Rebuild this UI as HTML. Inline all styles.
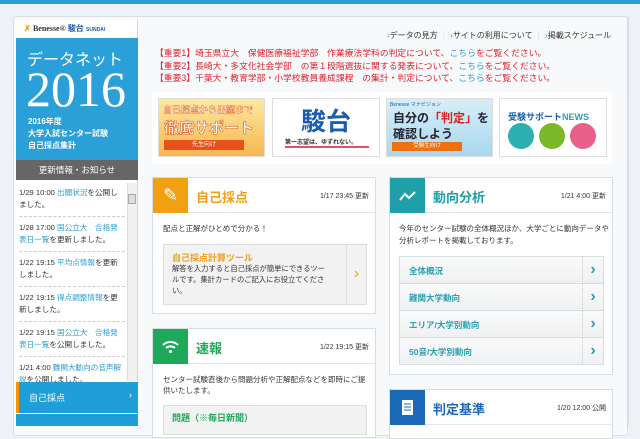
<!DOCTYPE html>
<html><head><meta charset="utf-8"><style>
*{margin:0;padding:0;box-sizing:border-box}
body{width:640px;height:426px;overflow:hidden;background:#eef2f6;font-family:"Liberation Sans","Noto Sans CJK JP",sans-serif;position:relative;font-size:8px;color:#333}
.a{position:absolute}
.blue{color:#2a9fd0}
.card{position:absolute;background:#fff;border:1px solid #d6dde3}
.ch{height:35px;border-bottom:1px solid #e3e7ea;position:relative}
.ic{position:absolute;left:0;top:0;width:35px;height:35px}
.ct{position:absolute;left:43px;top:9px;font-size:13px;font-weight:bold}
.cd{position:absolute;right:6px;top:13px;font-size:7px;color:#333}
.li{height:27px;border-bottom:1px solid #d8dde2;background:linear-gradient(#fafafa,#eef0f2);position:relative;font-weight:bold;color:#2aa0b0;font-size:8.5px;padding:8px 9px}
.li:after{content:"›";position:absolute;right:0;top:0;width:20px;height:27px;border-left:1px dotted #ccc;text-align:center;font-size:16px;line-height:25px;color:#2aa0b0}
.news div{padding:5px 0 5px 0;border-bottom:1px dashed #ccc;font-size:7.6px;line-height:12px;margin-right:12px}
</style></head><body>
<div class="a" style="left:0;top:0;width:640px;height:4px;background:#2a9fd0"></div>
<div class="a" style="left:13px;top:16px;width:615px;height:420px;background:#f7f9fa;border:1px solid #d8dee3;border-radius:3px"></div>
<!-- sidebar -->
<div class="a" style="left:15px;top:20px;width:123px;height:406px;background:#fff;border-right:1px solid #d0d8de"></div>
<div class="a" style="left:24px;top:23px;font-size:8px;font-weight:bold;color:#333"><span style="color:#f39800">✗</span> <span style="font-family:'Liberation Serif',serif">Benesse®</span> <span style="color:#1f5aa8">駿台</span> <span style="font-size:5px;color:#1f5aa8">SUNDAI</span></div>
<div class="a" style="left:16px;top:38px;width:122px;height:122px;background:#2a9fd8;color:#fff">
 <div class="a" style="left:11px;top:8px;font-size:16px;white-space:nowrap">データネット</div>
 <div class="a" style="left:10px;top:26px;font-size:50px;font-family:'Liberation Serif',serif;line-height:50px">2016</div>
 <div class="a" style="left:12px;top:78px;font-size:8px;font-weight:bold;line-height:12px">2016年度<br>大学入試センター試験<br>自己採点集計</div>
</div>
<div class="a" style="left:16px;top:160px;width:122px;height:20px;background:#666;color:#fff;font-size:8.5px;text-align:center;line-height:20px">更新情報・お知らせ</div>
<div class="a news" style="left:19px;top:182px;width:118px;height:200px;overflow:hidden">
<div>1/29 10:00 <span class="blue">出願状況</span>を公開しました。</div>
<div>1/28 17:00 <span class="blue">国公立大　合格発表日一覧</span>を更新しました。</div>
<div>1/22 19:15 <span class="blue">平均点情報</span>を更新しました。</div>
<div>1/22 19:15 <span class="blue">得点調整情報</span>を更新しました。</div>
<div>1/22 19:15 <span class="blue">国公立大　合格発表日一覧</span>を公開しました。</div>
<div>1/21 4:00 <span class="blue">難関大動向の音声解説</span>を公開しました。</div>
</div>
<div class="a" style="left:127px;top:183px;width:10px;height:198px;background:#f0f0f0;border-left:1px solid #ddd"></div>
<div class="a" style="left:128px;top:194px;width:8px;height:10px;background:#ddd;border:1px solid #aaa"></div>
<div class="a" style="left:16px;top:382px;width:122px;height:31px;background:#1e9fd8;border-left:3px solid #f39800;color:#fff;font-size:9px;padding:9px 0 0 10px">自己採点<span style="position:absolute;right:6px;top:8px">›</span></div>
<div class="a" style="left:16px;top:414px;width:122px;height:12px;background:#1e9fd8"></div>
<!-- top links -->
<div class="a" style="left:387px;top:30px;font-size:8px;color:#333;white-space:nowrap"><span class="blue">›</span>データの見方 <span style="color:#ccc">｜</span> <span class="blue">›</span>サイトの利用について <span style="color:#ccc">｜</span> <span class="blue">›</span>掲載スケジュール</div>
<div class="a" style="left:155px;top:47px;font-size:8.8px;line-height:12.5px;color:#e0202a;white-space:nowrap">
【重要1】埼玉県立大　保健医療福祉学部　作業療法学科の判定について、<span class="blue">こちら</span>をご覧ください。<br>
【重要2】長崎大・多文化社会学部　の第１段階選抜に関する発表について、<span class="blue">こちら</span>をご覧ください。<br>
【重要3】千葉大・教育学部・小学校教員養成課程　の集計・判定について、<span class="blue">こちら</span>をご覧ください。</div>
<!-- banners -->
<div class="a" style="left:152px;top:92px;width:460px;height:72px;background:#fff"></div>
<div class="a" style="left:158px;top:98px;width:107px;height:59px;background:linear-gradient(#fde9a0,#f8b650);border:1px solid #ddd">
 <div class="a" style="left:4px;top:4px;font-size:9px;font-weight:bold;color:#fff;-webkit-text-stroke:0.4px #e06020">自己採点から出願まで</div>
 <div class="a" style="left:5px;top:18px;font-size:15px;font-weight:bold;color:#fff;-webkit-text-stroke:0.6px #e06020">徹底サポート</div>
 <div class="a" style="left:5px;top:41px;width:80px;height:10px;background:#e8501e;color:#fff;font-size:6px;text-align:center;line-height:10px">先生向け</div></div>
<div class="a" style="left:272px;top:98px;width:108px;height:59px;background:#fff;border:1px solid #ddd">
 <div class="a" style="left:28px;top:3px;font-size:25px;font-weight:bold;color:#1a5eb0">駿台</div>
 <div class="a" style="left:12px;top:38px;font-size:6px;font-weight:bold">第一志望は、ゆずれない。</div>
 <div class="a" style="left:12px;top:47px;width:84px;height:2px;background:#e0506a"></div></div>
<div class="a" style="left:386px;top:98px;width:107px;height:59px;background:linear-gradient(#d8eef8,#a8d8ee);border:1px solid #ddd">
 <div class="a" style="left:3px;top:2px;font-size:5px;color:#1a5eb0">Benesse マナビジョン</div>
 <div class="a" style="left:6px;top:10px;font-size:12px;font-weight:bold;color:#223">自分の<span style="color:#e02020">「判定」</span>を</div>
 <div class="a" style="left:6px;top:26px;font-size:12px;font-weight:bold;color:#223">確認しよう</div>
 <div class="a" style="left:5px;top:43px;width:70px;height:9px;background:#f07010;color:#fff;font-size:5.5px;text-align:center;line-height:9px">受験生向け</div></div>
<div class="a" style="left:499px;top:98px;width:108px;height:59px;background:#fff;border:1px solid #ddd">
 <div class="a" style="left:8px;top:11px;font-size:9px;font-weight:bold;color:#1a5eb0">受験サポート<span style="color:#2aa0b0">NEWS</span></div>
 <div class="a" style="left:8px;top:24px;width:26px;height:26px;border-radius:50%;background:#2ab0b0"></div>
 <div class="a" style="left:39px;top:24px;width:26px;height:26px;border-radius:50%;background:#7ab828"></div>
 <div class="a" style="left:70px;top:24px;width:26px;height:26px;border-radius:50%;background:#e8608a"></div></div>
<!-- card 1 -->
<div class="card" style="left:152px;top:177px;width:224px;height:137px">
 <div class="ch"><div class="ic" style="background:#f0a010;color:#fff;font-size:18px;text-align:center;line-height:35px">✎</div><div class="ct" style="color:#f0a010">自己採点</div><div class="cd">1/17 23:45 更新</div></div>
 <div class="a" style="left:10px;top:45px;font-size:7.5px">配点と正解がひとめで分かる！</div>
 <div class="a" style="left:10px;top:66px;width:204px;height:61px;background:#f2f2f2;border:1px solid #ddd">
  <div class="a" style="left:8px;top:6px;font-size:9px;font-weight:bold;color:#f0a010">自己採点計算ツール</div>
  <div class="a" style="left:8px;top:18px;width:160px;font-size:7.3px;line-height:11px">解答を入力すると自己採点が簡単にできるツールです。集計カードのご記入にお役立てください。</div>
  <div class="a" style="right:0;top:0;width:20px;height:59px;border-left:1px dotted #ccc;color:#f0a010;font-size:16px;text-align:center;line-height:57px">›</div></div>
</div>
<!-- card 2 -->
<div class="card" style="left:152px;top:328px;width:224px;height:110px">
 <div class="ch"><div class="ic" style="background:#1ea85a"><svg width="35" height="35"><path d="M10 16 A11 11 0 0 1 25 16 M13 19 A7 7 0 0 1 22 19" stroke="#fff" stroke-width="2" fill="none"/><circle cx="17.5" cy="22.5" r="1.6" fill="#fff"/></svg></div><div class="ct" style="color:#1ea85a">速報</div><div class="cd">1/22 19:15 更新</div></div>
 <div class="a" style="left:10px;top:45px;width:205px;font-size:7.5px;line-height:11px">センター試験直後から問題分析や正解配点などを即時にご提供いたします。</div>
 <div class="a" style="left:10px;top:76px;width:204px;height:30px;background:#f2f2f2;border:1px solid #ddd;font-size:9px;font-weight:bold;color:#1ea85a;padding:5px 8px">問題（※毎日新聞）</div>
</div>
<!-- card 3 -->
<div class="card" style="left:389px;top:177px;width:224px;height:198px">
 <div class="ch"><div class="ic" style="background:#1fa0a8"><svg width="35" height="35"><path d="M10 22 L15 16 L19 20 L25 14" stroke="#fff" stroke-width="2" fill="none"/></svg></div><div class="ct" style="color:#1fa0a8">動向分析</div><div class="cd">1/21 4:00 更新</div></div>
 <div class="a" style="left:9px;top:45px;width:210px;font-size:7.5px;line-height:12px">今年のセンター試験の全体概況ほか、大学ごとに動向データや分析レポートを掲載しております。</div>
 <div class="a" style="left:9px;top:78px;width:205px;border:1px solid #d8dde2;border-bottom:none">
  <div class="li">全体概況</div><div class="li">難関大学動向</div><div class="li">エリア/大学別動向</div><div class="li">50音/大学別動向</div></div>
</div>
<!-- card 4 -->
<div class="card" style="left:389px;top:389px;width:224px;height:50px">
 <div class="ch"><div class="ic" style="background:#1a6ab8"><svg width="35" height="35"><rect x="12" y="10" width="11" height="15" fill="#fff"/><path d="M14 14h7M14 17h7M14 20h7" stroke="#1a6ab8"/></svg></div><div class="ct" style="color:#1a6ab8">判定基準</div><div class="cd">1/20 12:00 公開</div></div>
</div>
<div class="a" style="left:628px;top:16px;width:1px;height:410px;background:#d8dee3"></div>
</body></html>
